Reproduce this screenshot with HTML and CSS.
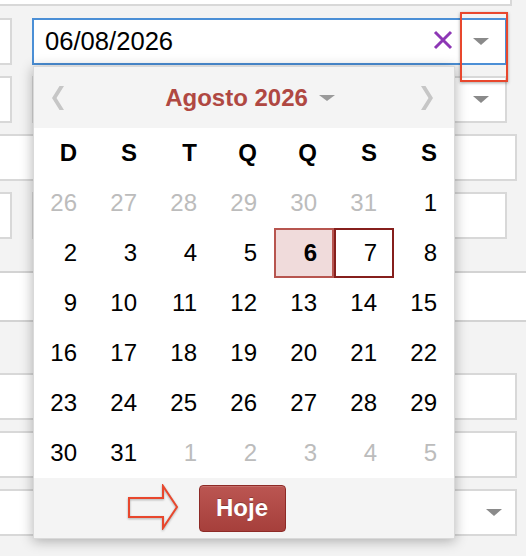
FILE: index.html
```html
<!DOCTYPE html>
<html lang="pt">
<head>
<meta charset="utf-8">
<title>Data</title>
<link rel="stylesheet" href="styles.css">
</head>
<body>
<div class="form">
  <div class="field top"></div>

  <div class="row first">
    <div class="field left"></div>
    <div class="datefield">
      <div class="field input">
        <span class="value">06/08/2026</span>
        <span class="clear">
          <svg width="20" height="20" viewBox="0 0 20 20"><path d="M2 2 L18 18 M18 2 L2 18" stroke="#8d37b5" stroke-width="3" fill="none"/></svg>
        </span>
        <span class="drop"><span class="tri"></span></span>
      </div>
      <div class="mark"></div>
      <div class="picker">
        <div class="picker-head">
          <svg class="chev" width="12" height="24" viewBox="0 0 12 24"><polygon points="12,0 7.5,0 0,12 7.5,24 12,24 4.5,12" fill="#c6c6c6"/></svg>
          <div class="title">Agosto 2026 <span class="caret"></span></div>
          <svg class="chev" width="12" height="24" viewBox="0 0 12 24"><polygon points="0,0 4.5,0 12,12 4.5,24 0,24 7.5,12" fill="#c6c6c6"/></svg>
        </div>
        <div class="grid">
          <span class="wd">D</span><span class="wd">S</span><span class="wd">T</span><span class="wd">Q</span><span class="wd">Q</span><span class="wd">S</span><span class="wd">S</span>
          <span class="muted">26</span><span class="muted">27</span><span class="muted">28</span><span class="muted">29</span><span class="muted">30</span><span class="muted">31</span><span>1</span>
          <span>2</span><span>3</span><span>4</span><span>5</span><span class="sel">6</span><span class="today">7</span><span>8</span>
          <span>9</span><span>10</span><span>11</span><span>12</span><span>13</span><span>14</span><span>15</span>
          <span>16</span><span>17</span><span>18</span><span>19</span><span>20</span><span>21</span><span>22</span>
          <span>23</span><span>24</span><span>25</span><span>26</span><span>27</span><span>28</span><span>29</span>
          <span>30</span><span>31</span><span class="muted">1</span><span class="muted">2</span><span class="muted">3</span><span class="muted">4</span><span class="muted">5</span>
        </div>
        <div class="picker-foot">
          <svg class="pointer" width="52" height="46" viewBox="0 0 52 46"><polygon points="1,14 35,14 35,2 49,23 35,44 35,33 1,33" fill="none" stroke="#e8472d" stroke-width="2" stroke-linejoin="miter"/></svg>
          <button class="hoje" type="button">Hoje</button>
        </div>
      </div>
    </div>
  </div>

  <div class="row">
    <div class="field left"></div>
    <div class="field right select"><span class="drop"><span class="tri"></span></span></div>
  </div>

  <div class="field wide gap"></div>

  <div class="row">
    <div class="field left"></div>
    <div class="field right"></div>
  </div>

  <div class="band"></div>

  <div class="field wide after-band"></div>
  <div class="field wide gap"></div>
  <div class="field wide gap select"><span class="drop narrow"><span class="tri"></span></span></div>
</div>
</body>
</html>
```

FILE: styles.css
```css
html, body {
  margin: 0;
  padding: 0;
}
body {
  background: #f3f3f3;
  font-family: "Liberation Sans", Arial, Helvetica, sans-serif;
  overflow: hidden;
  width: 526px;
  height: 556px;
}
.form {
  display: flex;
  flex-direction: column;
  align-items: flex-start;
}
.field {
  box-sizing: border-box;
  background: #fff;
  border: 2px solid #d8d8d8;
  height: 47px;
}
.top {
  width: 512px;
  height: 6px;
  border-top: 0;
  border-left: 0;
}
.row {
  display: flex;
  gap: 20px;
  width: 507px;
  margin-top: 11px;
}
.row.first {
  margin-top: 12px;
}
.left {
  width: 12px;
  flex: none;
  border-left: 0;
}
.right {
  width: 475px;
}
.wide {
  width: 517px;
  border-left: 0;
}
.gap {
  margin-top: 11px;
}
.band {
  box-sizing: border-box;
  width: 526px;
  height: 51px;
  margin-top: 32px;
  background: #fff;
  border-top: 2px solid #d3d3d3;
  border-bottom: 2px solid #d3d3d3;
}
.after-band {
  margin-top: 51px;
}
.select {
  display: flex;
  justify-content: flex-end;
  align-items: center;
}
.drop {
  width: 48px;
  height: 100%;
  display: flex;
  align-items: center;
  justify-content: center;
  flex: none;
}
.drop.narrow {
  width: 42px;
}
.tri {
  width: 0;
  height: 0;
  border-left: 8px solid transparent;
  border-right: 8px solid transparent;
  border-top: 7px solid #8a8a8a;
}

/* date input */
.datefield {
  position: relative;
  width: 475px;
  height: 47px;
}
.input {
  border-color: #4b8fd6;
  display: flex;
  align-items: center;
  padding-left: 11px;
  width: 475px;
}
.value {
  flex: 1;
  font-size: 25.6px;
  color: #000;
}
.clear {
  width: 20px;
  height: 20px;
  margin-left: 4px;
  margin-bottom: 3px;
  display: flex;
}
.input .drop {
  margin-left: 4px;
}

/* annotation box */
.mark {
  position: absolute;
  left: 428px;
  top: -6px;
  width: 48px;
  height: 70px;
  box-sizing: border-box;
  border: 2px solid #e8472d;
  box-shadow: 0 1px 3px rgba(0, 0, 0, 0.35);
  z-index: 3;
}

/* calendar popup */
.picker {
  position: absolute;
  left: 1px;
  top: 48px;
  width: 422px;
  box-sizing: border-box;
  border: 1px solid #d9d9d9;
  background: #fff;
  box-shadow: 0 2px 12px rgba(0, 0, 0, 0.3);
  z-index: 2;
}
.picker-head {
  height: 61px;
  background: #f4f4f4;
  display: flex;
  align-items: center;
  justify-content: space-between;
  padding: 0 21px 0 18px;
}
.chev {
  display: block;
  flex: none;
}
.title {
  display: flex;
  align-items: center;
  gap: 11px;
  margin-left: 15px;
  color: #b04842;
  font-weight: bold;
  font-size: 24px;
}
.caret {
  width: 0;
  height: 0;
  border-left: 8px solid transparent;
  border-right: 8px solid transparent;
  border-top: 6px solid #9a9a9a;
}
.grid {
  display: grid;
  grid-template-columns: repeat(7, 60px);
  grid-auto-rows: 50px;
}
.grid span {
  box-sizing: border-box;
  text-align: right;
  padding-right: 17px;
  line-height: 50px;
  font-size: 24px;
  color: #000;
}
.grid .wd {
  font-weight: bold;
}
.grid .muted {
  color: #bcbcbc;
}
.grid .sel {
  background: #f0dbdb;
  border: 2px solid #b7554f;
  font-weight: bold;
  line-height: 46px;
  padding-right: 15px;
}
.grid .today {
  border: 2px solid #861f1c;
  line-height: 46px;
  padding-right: 15px;
}
.picker-foot {
  position: relative;
  height: 60px;
  background: #f4f4f4;
  display: flex;
  align-items: center;
  justify-content: center;
}
.pointer {
  position: absolute;
  left: 94px;
  top: 6px;
  filter: drop-shadow(0 1px 1px rgba(0, 0, 0, 0.3));
}
.hoje {
  width: 87px;
  height: 47px;
  margin-right: 4px;
  box-sizing: border-box;
  border: 1px solid #8d2a26;
  border-radius: 4px;
  background: linear-gradient(#bb5652, #a63f3b);
  color: #fff;
  font-family: "Liberation Sans", Arial, sans-serif;
  font-weight: bold;
  font-size: 24px;
  padding: 0;
  text-shadow: 0 -1px 0 rgba(0, 0, 0, 0.25);
  box-shadow: inset 0 1px 0 rgba(255, 255, 255, 0.15);
}
```
